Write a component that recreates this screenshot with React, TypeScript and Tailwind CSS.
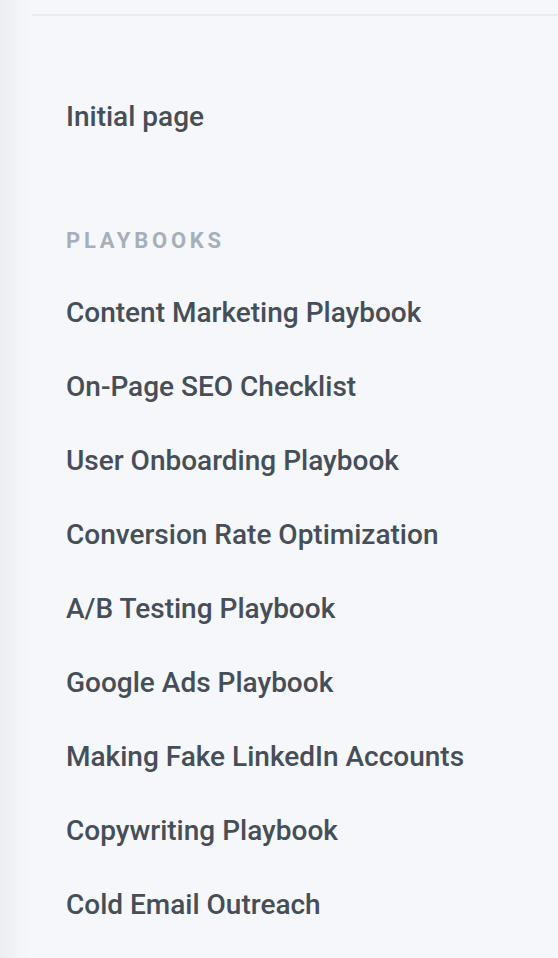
import React from 'react';

const playbooks = [
  'Content Marketing Playbook',
  'On-Page SEO Checklist',
  'User Onboarding Playbook',
  'Conversion Rate Optimization',
  'A/B Testing Playbook',
  'Google Ads Playbook',
  'Making Fake LinkedIn Accounts',
  'Copywriting Playbook',
  'Cold Email Outreach',
];

const NavItem: React.FC<{ label: string }> = ({ label }) => (
  <a className="flex h-[74px] items-center text-[28px] font-medium text-[#464e57] cursor-pointer">
    {label}
  </a>
);

export default function App() {
  return (
    <div
      className="flex h-[958px] w-full overflow-hidden bg-[#f5f7fa]"
      style={{ fontFamily: 'Roboto, "Noto Sans", sans-serif' }}
    >
      <div className="w-8 shrink-0 bg-gradient-to-r from-[#eceef1] to-[#f5f7fa]" />
      <div className="flex-1">
        <div className="mt-[14px] border-t-2 border-[#e8ebef]" />
        <nav className="pl-[34px] pt-[64px]">
          <NavItem label="Initial page" />
          <div className="mt-[71px] mb-[21px] flex h-[30px] items-center text-[22px] font-bold tracking-[0.17em] text-[#a6b0ba]">
            PLAYBOOKS
          </div>
          {playbooks.map((p) => (
            <NavItem key={p} label={p} />
          ))}
        </nav>
      </div>
    </div>
  );
}
